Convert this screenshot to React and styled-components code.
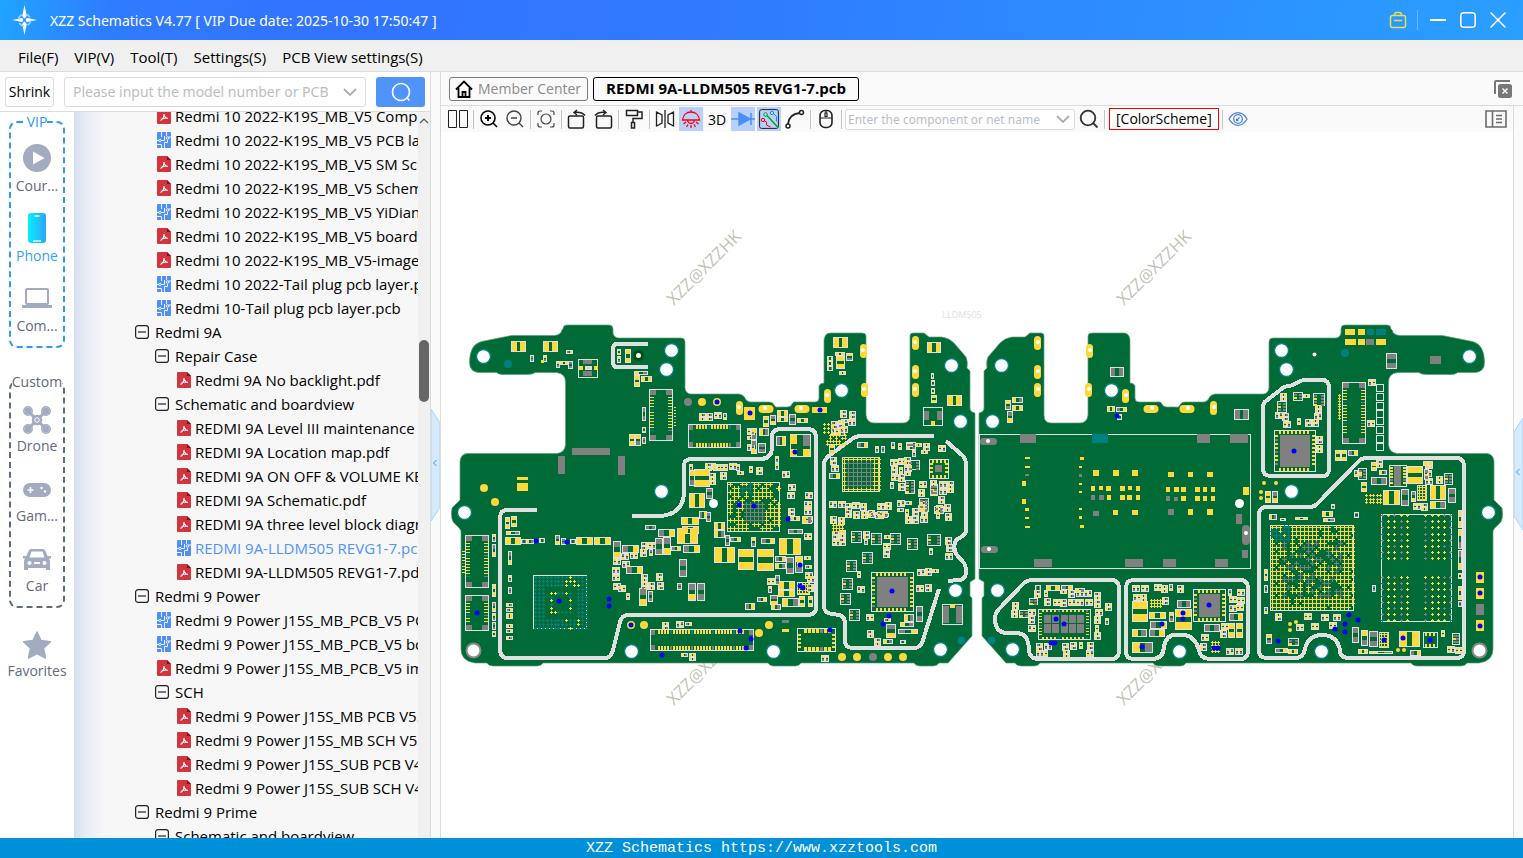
import React from 'react';
import styled, { createGlobalStyle, css } from 'styled-components';

const GlobalStyle = createGlobalStyle`
  * { box-sizing: border-box; }
  html, body, #root { height: 100%; margin: 0; }
  body {
    overflow: hidden;
    font-family: "Open Sans", "Noto Sans", sans-serif;
    font-size: 14px;
    color: #000;
  }
  button, input { font: inherit; color: inherit; }
`;

const Window = styled.div`
  display: flex;
  flex-direction: column;
  height: 100vh;
  background: #fff;
`;

/* ---------- title bar ---------- */

const TitleBar = styled.header`
  display: flex;
  align-items: center;
  height: 40px;
  flex: none;
  padding: 0 10px 0 12px;
  color: #fff;
  background: linear-gradient(100deg, #20a5ff 0, #2f7cff 110px, #3273ff 300px, #3079ff 45%, #2a9fff 100%);
`;

const Title = styled.h1`
  flex: 1;
  margin: 0 0 0 13px;
  font-family: "Noto Sans", sans-serif;
  font-size: 14px;
  font-weight: 400;
`;

const WindowButton = styled.button`
  display: flex;
  align-items: center;
  justify-content: center;
  width: 30px;
  height: 30px;
  padding: 0;
  border: 0;
  background: none;
`;

const TitleDivider = styled.span`
  width: 1px;
  height: 20px;
  margin: 0 5px 0 4px;
  background: #6fb7ff;
`;

const MenuBar = styled.nav`
  display: flex;
  align-items: center;
  gap: 16px;
  flex: none;
  height: 32px;
  padding: 2px 18px 0;
  background: #f0f0f0;
  border-bottom: 1px solid #dcdcdc;
  font-size: 15px;
`;

const MenuItem = styled.button`
  padding: 0;
  border: 0;
  background: none;
`;

const Body = styled.div`
  display: flex;
  flex: 1;
  min-height: 0;
`;

/* ---------- left side ---------- */

const Side = styled.aside`
  display: flex;
  flex-direction: column;
  flex: none;
  width: 431px;
  border-right: 1px solid #dcdcdc;
`;

const SearchBar = styled.form`
  display: flex;
  align-items: center;
  gap: 10px;
  height: 40px;
  flex: none;
  padding: 0 5px;
  border-bottom: 1px solid #dcdcdc;
`;

const ShrinkButton = styled.button`
  width: 49px;
  height: 30px;
  padding: 0;
  border: 1px solid #dcdcdc;
  border-radius: 3px;
  background: #fff;
`;

const Combo = styled.div`
  display: flex;
  align-items: center;
  width: ${p => (p.$small ? '230px' : '302px')};
  height: ${p => (p.$small ? '21px' : '30px')};
  padding: ${p => (p.$small ? '0 4px 0 2px' : '0 8px')};
  border: 1px solid #dcdcdc;
  border-radius: 3px;
  background: #fff;
  font-family: "Noto Sans", sans-serif;
  font-size: ${p => (p.$small ? '12px' : '14px')};
`;

const ComboInput = styled.input`
  flex: 1;
  min-width: 0;
  padding: 0;
  border: 0;
  outline: 0;
  background: none;
  &::placeholder { color: #b9bec6; opacity: 1; }
`;

const ComboArrow = styled.button`
  display: flex;
  padding: 0;
  border: 0;
  background: none;
`;

const SearchButton = styled.button`
  display: flex;
  align-items: center;
  justify-content: center;
  width: 49px;
  height: 30px;
  padding: 0;
  border: 0;
  border-radius: 3px;
  background: #5094fb;
`;

const SideBody = styled.div`
  display: flex;
  flex: 1;
  min-height: 0;
`;

const Rail = styled.nav`
  width: 74px;
  flex: none;
  padding: 0 9px;
`;

const RailGroup = styled.fieldset`
  display: flex;
  flex-direction: column;
  min-width: 0;
  margin: 0 0 ${p => p.$gap}px;
  padding: 0 0 10px;
  border: 2px dashed ${p => p.$color};
  border-radius: 8px;
  color: ${p => p.$color};
`;

const RailLegend = styled.legend`
  height: 20px;
  margin: 0 auto;
  padding: 0;
  line-height: 20px;
`;

const RailButton = styled.button`
  display: flex;
  flex-direction: column;
  align-items: center;
  justify-content: flex-end;
  width: 100%;
  height: ${p => (p.$first ? '64px' : '70px')};
  padding: 0;
  border: 0;
  background: none;
  color: ${p => (p.$active ? '#3aa0f5' : '#5f6b80')};
  line-height: 20px;
  white-space: nowrap;
`;

const RailIcon = styled.span`
  display: flex;
  align-items: center;
  justify-content: center;
  height: ${p => (p.$tight ? '33px' : '36px')};
`;

const TreePane = styled.div`
  display: flex;
  flex: 1;
  min-width: 0;
  background: linear-gradient(90deg, #d7e0f1 0, #e8ecf4 12px, #f7f7f7 32px);
`;

const TreeClip = styled.div`
  display: flex;
  flex: 1;
  min-width: 0;
  overflow: hidden;
`;

const Tree = styled.ul`
  flex: 1;
  min-width: 0;
  margin: -8px 0 0;
  padding: 0;
  list-style: none;
  overflow: hidden;
  font-size: 15px;
`;

const TreeRow = styled.li`
  display: flex;
  align-items: center;
  gap: ${p => (p.$folder ? '6px' : '4px')};
  height: 24px;
  padding-left: ${p => p.$indent}px;
  white-space: nowrap;
  color: ${p => (p.$active ? '#5094fb' : '#000')};
`;

const RowIcon = styled.span`
  display: flex;
  flex: none;
`;

const ScrollTrack = styled.div`
  display: flex;
  flex-direction: column;
  align-items: center;
  width: 12px;
  flex: none;
  padding-top: 6px;
  background: #f0f0f0;
`;

const ScrollThumb = styled.div`
  width: 10px;
  height: 62px;
  margin-top: 216px;
  border-radius: 5px;
  background: #666;
`;

const Splitter = styled.div`
  display: flex;
  align-items: center;
  flex: none;
  width: 10px;
  padding-top: ${p => (p.$right ? '4px' : '20px')};
  background: ${p => (p.$right ? '#fafafa' : '#f8fbf7')};
  border-${p => (p.$right ? 'left' : 'right')}: 1px solid #dcdcdc;
`;

const SplitterButton = styled.button`
  display: flex;
  padding: 0;
  border: 0;
  background: none;
`;

/* ---------- document area ---------- */

const Main = styled.main`
  display: flex;
  flex-direction: column;
  flex: 1;
  min-width: 0;
`;

const TabBar = styled.div`
  display: flex;
  align-items: center;
  gap: 5px;
  height: 34px;
  flex: none;
  padding: 0 8px;
  background: #fafafa;
  border-bottom: 1px solid #dcdcdc;
`;

const Tab = styled.button`
  display: flex;
  align-items: center;
  gap: 5px;
  height: 24px;
  padding: 0 6px 0 5px;
  border: 1px solid #7b7b7b;
  border-radius: 3px;
  background: #fafafa;
  color: #8a8a8a;
  white-space: nowrap;
  ${p => p.$active && css`
    padding: 0 12px 1px;
    border-color: #000;
    color: #000;
    font-size: 15px;
    font-weight: 700;
  `}
`;

const Spacer = styled.span`
  flex: 1;
`;

const IconButton = styled.button`
  display: flex;
  align-items: center;
  justify-content: center;
  flex: none;
  width: 24px;
  height: 24px;
  padding: 0;
  border: 0;
  background: ${p => (p.$on ? '#b8d0fb' : 'none')};
`;

const Workspace = styled.div`
  display: flex;
  flex: 1;
  min-height: 0;
`;

const Viewer = styled.div`
  display: flex;
  flex-direction: column;
  flex: 1;
  min-width: 0;
`;

const Toolbar = styled.div`
  display: flex;
  align-items: center;
  gap: 2px;
  height: 26px;
  flex: none;
  padding: 0 5px;
  background: #fafafa;
`;

const Sep = styled.span`
  width: 1px;
  height: 19px;
  margin: 0 1px;
  background: #c4c4c4;
`;

const SchemeButton = styled.button`
  height: 22px;
  margin: 0 0 0 1px;
  padding: 0 6px;
  border: 1px solid #f00;
  background: #fff;
  line-height: 20px;
`;

const Canvas = styled.div`
  display: flex;
  flex: 1;
  min-height: 0;
  background: #fff;
  svg { width: 100%; height: 100%; }
`;

const Footer = styled.footer`
  flex: none;
  height: 20px;
  background: #0090d9;
  color: #fff;
  font: 15px/22px "Liberation Mono", monospace;
  text-align: center;
`;

/* ---------- icons ---------- */

const Icon = ({ w = 20, h = w, box = `0 0 ${w} ${h}`, stroke = '#222', sw = 1.5, children }) =>
  <svg width={w} height={h} viewBox={box} fill="none" stroke={stroke} strokeWidth={sw} aria-hidden="true">
    {children}
  </svg>
;

const Logo = () =>
  <Icon w={25} h={30} stroke="none">
    <path d="M12.500 0l2.300 11-2.300 3-2.300-3zM12.500 30l2.300-11-2.300-3-2.300 3zM0 15l10-2 2.500 2-2.500 2zM25 15l-10-2-2.500 2 2.500 2z" fill="#fff" />
    <circle cx="12.500" cy="15" r="6" stroke="#9fd6ff" strokeDasharray="6 3.400" />
    <circle cx="12.500" cy="15" r="1.500" fill="#2e8fff" />
  </Icon>
;

const Chevron = ({ size = 14 }) =>
  <Icon w={size} h={8} box="0 0 14 8" stroke="#a9aeb6" sw={1.8}><path d="M1 1l6 6 6-6" /></Icon>
;

const PdfIcon = () =>
  <Icon w={14} h={16} stroke="none">
    <path d="M1 0h9l4 4v11a1 1 0 01-1 1H1a1 1 0 01-1-1V1a1 1 0 011-1z" fill="#d2353d" />
    <path d="M10 0l4 4h-4z" fill="#8c0d16" />
    <path d="M3.500 12.500c2-1 3.500-3.500 3.500-6.500M7 6c0 2.500 1.500 4 4 4.500M4 11.500c2-1.500 4-1.700 7-1.300" stroke="#fff" strokeWidth="1.100" />
  </Icon>
;

const PcbIcon = () =>
  <Icon w={14} h={16} stroke="none">
    <rect width="14" height="16" rx="1" fill="#4e90f8" />
    <path d="M4.500 0v5M0 8.500h2M4 8.500h3.500V4M9.500 0v4M11.500 5H14M4.500 16v-3.500H0M7.500 16v-5.500h3V8" stroke="#fff" strokeWidth=".9" />
    <circle cx="3" cy="8.500" r="1.200" stroke="#fff" strokeWidth=".9" />
    <circle cx="10.500" cy="6" r="1.300" stroke="#fff" strokeWidth=".9" />
  </Icon>
;

const FolderIcon = () =>
  <Icon w={14} stroke="#222" sw={1.2}>
    <rect x=".6" y=".6" width="12.800" height="12.800" rx="2.500" />
    <path d="M3 7h8" />
  </Icon>
;

const grey = '#a2abc0';

const railIcons = {
  play: <Icon w={28} stroke="none"><circle cx="14" cy="14" r="14" fill={grey} /><path d="M10 7.500v13l11.500-6.500z" fill="#fff" /></Icon>,
  phone:
    <Icon w={18} h={30} stroke="none">
      <defs>
        <linearGradient id="phone"><stop stopColor="#08eefe" /><stop offset="1" stopColor="#2fa4fb" /></linearGradient>
      </defs>
      <rect width="18" height="30" rx="3" fill="url(#phone)" />
      <path d="M6.500 3h5M5 28h8" stroke="#cfffff" />
    </Icon>,
  laptop:
    <Icon w={30} h={20} stroke={grey} sw={2}>
      <rect x="4" y="1" width="22" height="15" rx="1" />
      <path d="M0 18.500h30" strokeWidth="3" />
    </Icon>,
  drone:
    <Icon w={28} stroke={grey} sw={1.5}>
      {[[5, 5], [23, 5], [5, 23], [23, 23]].map(([x, y]) =>
        <g key={`${x}${y}`}><circle cx={x} cy={y} r="4.200" /><circle cx={x} cy={y} r="2.700" fill={grey} /></g>
      )}
      <path d="M5 5l9 9 9-9M5 23l9-9 9 9" strokeWidth="3" />
      <circle cx="14" cy="14" r="4.500" fill={grey} />
      <circle cx="14" cy="14" r="2.200" stroke="#fff" strokeWidth="1" />
    </Icon>,
  game:
    <Icon w={28} h={14} stroke="none">
      <rect width="28" height="14" rx="7" fill={grey} />
      <path d="M4.500 7h6M7.500 4v6" stroke="#fff" strokeWidth="1.600" />
      <circle cx="18.500" cy="5" r="1.200" fill="#fff" /><circle cx="22" cy="8.500" r="1.200" fill="#fff" />
    </Icon>,
  car:
    <Icon w={28} h={24} stroke="none">
      <path d="M8 1h12q2 0 3 3l1.500 4H28v2.500h-2l1 2.500v9h-4v-2H5v2H1v-9l1-2.500H0V8h3.500L5 4q1-3 3-3zM8.500 3.500L6.500 9.500h15l-2-6z" fill={grey} fillRule="evenodd" />
      <circle cx="6.500" cy="15" r="2" fill="#fff" /><circle cx="21.500" cy="15" r="2" fill="#fff" />
      <path d="M11 15h6" stroke="#fff" strokeWidth="2" />
    </Icon>,
  star:
    <Icon w={28} stroke="none">
      <path d="M14 1l4 8.500 9.500 1.200-7 6.500 2 9.800L14 22.500 5.500 27l2-9.800-7-6.500L10 9.500z" fill={grey} stroke={grey} strokeLinejoin="round" />
    </Icon>
};

const toolIcons = {
  panes: <Icon><path d="M.5 1.500h8v17h-8zM11.500 1.500h8v17h-8z" strokeWidth="1" /></Icon>,
  zoomIn: <Icon stroke="#000" sw={1.6}><circle cx="9" cy="9" r="7" /><path d="M6 9h6M9 6v6" strokeWidth="2" /><path d="M14 14l4 4" /></Icon>,
  zoomOut: <Icon stroke="#444" sw={1.4}><circle cx="9" cy="9" r="7" /><path d="M6 9h6M14 14l4 4" /></Icon>,
  fit: <Icon stroke="#444" sw={1.2}><circle cx="10" cy="10" r="5" /><path d="M2 6V4q0-2 2-2h2M14 2h2q2 0 2 2v2M18 14v2q0 2-2 2h-2M6 18H4q-2 0-2-2v-2" /></Icon>,
  rotL: <Icon><rect x="1.500" y="7" width="15" height="12" rx="1.500" /><path d="M10 1L7 3.500 10 6M7.500 3.500q7-1 10.500 3" /></Icon>,
  rotR: <Icon><rect x="3.500" y="7" width="15" height="12" rx="1.500" /><path d="M10 1l3 2.500L10 6M12.500 3.500q-7-1-10.500 3" /></Icon>,
  paint: <Icon><path d="M2.500 1.500h11v5h-11zM13.500 3H18v6.500H9v4M7.500 13.500h3V19h-3z" /></Icon>,
  flip: <Icon sw={1.3}><path d="M1.500 3v14l5.500-3V6zM18.500 3v14L13 14V6zM10 1v18" /></Icon>,
  lamp: <Icon stroke="#f00" sw={1.3}><path d="M1.500 11C2 6 5.500 3 10 3s8 3 8.500 8zM10 1v2M6.500 11q.5 3.500 3.500 3.500t3.500-3.500M5 13l-2.500 2M15 13l2.500 2M7 15.500L5.500 18M13 15.500l1.500 2.500M10 16v3" /></Icon>,
  diode: <Icon w={24} h={20} stroke="#4a8ff5"><path d="M0 10h24M20 4v12" /><path d="M8 4l11 6-11 6z" fill="#4a8ff5" /></Icon>,
  traces:
    <Icon sw={1}>
      <rect x=".6" y=".6" width="18.800" height="18.800" rx="2" />
      <path d="M8 6.500l11 12" stroke="#0a2" strokeWidth="1.500" /><circle cx="6.500" cy="5.500" r="1.800" stroke="#0a2" />
      <path d="M5.500 12l2 1v3l4 2" stroke="#f00" /><circle cx="4" cy="11" r="1.700" stroke="#f00" />
      <path d="M14.500 4.500l3 3v5" stroke="#28f" /><circle cx="13" cy="4" r="1.700" stroke="#28f" />
    </Icon>,
  arc: <Icon><circle cx="3" cy="17" r="2" /><circle cx="16.500" cy="3.500" r="2" /><path d="M3 15Q4 5 14.500 4" strokeWidth="1.800" /></Icon>,
  mouse: <Icon sw={1.6}><rect x="4" y="1.500" width="12" height="17" rx="5" /><path d="M4 9h12M10 2v2M9 4h2v3.500H9z" strokeWidth="1.200" /></Icon>,
  search: <Icon stroke="#333" sw={1.8}><circle cx="9" cy="9" r="7.300" /><path d="M14 14l4.500 4.500" /></Icon>,
  eye: <Icon stroke="#4b86dc" sw={1.3}><path d="M1 10c5-8.500 13-8.500 18 0-5 8.500-13 8.500-18 0z" /><circle cx="10" cy="10" r="4.300" /><path d="M8.500 11.500l3-3M8.500 9.500v2.200h2" /></Icon>,
  props: <Icon w={22} h={18} stroke="#6c6c6c" sw={1.6}><path d="M1 1h20v16H1zM7.500 1v16M11 5.500h6M11 9h6M11 12.500h6" /></Icon>
};

/* ---------- board drawing ---------- */

const colors = { silk: '#e0e0e0', gold: '#ffd83c', grey: '#808080', teal: '#008080', pcb: '#006b36', blue: '#0000ff' };

const outline = `M563 329q0-4 4-4h42q4 0 4 4v4q1 5 6 5h62q4 0 4 4v46q1 6 6 6h48q5 1 6 4t5 4h19q4 0 5 3t5 2h8q4 0 5-3t5-2
  h18q4 0 4-4v-12q1-3 5-3v-43q1-7 6-7h32q4 0 4 3v79q1 8 8 8h29q7 0 7-8v-79q0-3 3-3h11l5 4h13q7 1 12 6l12 14q2 4 1 11l3 3v37
  q0 4 5 5v166l-5 3v14l2 2v38l-24 27h-9q-2 3-6 3h-13q-4 0-6-3H801q-2 3-5 3h-23q-3 0-5-3H543q-2 3-6 3h-44q-4 0-6-3h-12
  q-14-2-14-14V531q-1-3-6-7t-3-16l8-8v-39q1-7 7-7.500h90q8-1 8.500-9v-62q0-9-9-10h-21q-3 2-8 2h-24q-5 0-7-2h-18q-9-1-9-10
  q0-18 12-21l30-6h43q7-1 7-5z`;

const shields = `M648 344H617q-4 0-4 5v13q0 5 4 5h31
  M537 510H508q-8 0-8 8V649q0 9 8 9h97q6 0 8-8l7-28q2-7 8-7H807q9 0 9-8V438q0-9-9-9H781q-9 0-9 8v10q0 12-12 12H691q-7 0-7 7v25q0 25-27 25H632
  M934 436H862q-6 0-10 3l-22 16q-6 4-6 10V606q0 7 8 8l8 1q5 2 5 9v16q0 8 8 8h61q7 0 9-8l16-51
  M946 441l17 15q3 3 3 9v64q0 6-5 8-10 4-5 17l8 9q2 3 2 9 0 8-8 8l-10 1
  M1033 580h78q8 0 8 8v63q0 8-8 8h-72q-9 0-10-8 0-18-13-18h-10q-11-1-11-14 0-6 4-10l24-25q3-4 10-4z
  M1134 580h106q8 0 8 8v63q0 8-8 8h-31q-9-1-10-9-4-14-15-15h-9q-9 0-11 12-1 12-12 12h-18q-8 0-8-8v-63q0-8 8-8z
  M1303 380h19q7 0 7 7v82q0 7-7 7h-51q-8 0-8-8v-61q0-4 3-6l18-14 9-2z
  M1367 458h89q8 0 8 8v185q0 7-8 7H1349q-9 0-9-8-3-15-18-15-14 0-17 14-2 9-9 9h-29q-8 0-8-8V515q0-8 8-8h43q4 0 7-3l41-42q3-4 9-4z`;

const ink = { silk: '', gold: '', grey: '', teal: '' };
const put = (c, x, y, w, h) => { ink[c] += `M${Math.round(x)} ${Math.round(y)}h${Math.round(w)}v${Math.round(h)}h-${Math.round(w)}z`; };
const code = { y: 'gold', g: 'grey', t: 'teal' };

const frame = (x, y, w, h) => {
  put('silk', x, y, w, 1);
  put('silk', x, y + h - 1, w, 1);
  put('silk', x, y, 1, h);
  put('silk', x + w - 1, y, 1, h);
};

// two-pad part, pads on its short sides
const chip = (x, y, w, h, pads = 'yy') => {
  frame(x, y, w, h);
  const long = Math.max(w, h) - 2;
  const pad = Math.max(1, Math.round(long * 0.36));
  if (w >= h) {
    put(code[pads[0]], x + 1, y + 1, pad, h - 2);
    put(code[pads[1]], x + w - 1 - pad, y + 1, pad, h - 2);
  } else {
    put(code[pads[0]], x + 1, y + 1, w - 2, pad);
    put(code[pads[1]], x + 1, y + h - 1 - pad, w - 2, pad);
  }
};

const random = seed => () => {
  seed = (seed * 16807) % 2147483647;
  return seed / 2147483647;
};

// dense area of small passives
const field = (x, y, w, h, fill = 0.85) => {
  const next = random(x * 31 + y * 17 + w);
  const kinds = ['yy', 'yg', 'gy', 'yg', 'yy'];
  const kind = () => kinds[Math.floor(next() * kinds.length)];
  for (let j = 0; j + 6 <= h; j += 8) {
    for (let i = 0; i + 6 <= w; i += 8) {
      if (next() > fill) continue;
      const px = x + i + Math.floor(next() * 2);
      const py = y + j + Math.floor(next() * 2);
      const r = next();
      if (r < 0.4) {
        chip(px, py, 7, 4, kind());
        chip(px, py + 4, 7, 4, kind());
      } else if (r < 0.8) {
        chip(px, py, 4, 7, kind());
        chip(px + 4, py, 4, 7, kind());
      } else if (r < 0.9) {
        chip(px, py, 4, 7, kind());
      } else {
        chip(px, py, 7, 4, kind());
      }
    }
  }
};

// small square ic with pads on two sides
const ic = (x, y, w = 11, h = 12) => {
  frame(x, y, w, h);
  for (let i = 1; i + 2 < h; i += 3) {
    put(i % 2 ? 'grey' : 'gold', x + 1, y + i + 1, 3, 2);
    put('grey', x + w - 4, y + i + 1, 3, 2);
  }
};

const pins = (x, y, n, step, w, h, vertical, alt = 'grey') => {
  for (let i = 0; i < n; i += 1) {
    const c = i % 7 === 4 ? alt : 'gold';
    if (vertical) put(c, x, y + i * step, w, h);
    else put(c, x + i * step, y, w, h);
  }
};

const connector = (x, y, w, h, vertical) => {
  frame(x, y, w, h);
  const cw = vertical ? 6 : 4;
  [[x + 1, y + 1], [x + w - cw - 1, y + 1], [x + 1, y + h - 6], [x + w - cw - 1, y + h - 6]].forEach(([a, b]) => put('grey', a, b, cw, 5));
  if (vertical) {
    pins(x + 1, y + 8, Math.floor((h - 15) / 3), 3, 4, 1, true, 'teal');
    pins(x + w - 5, y + 8, Math.floor((h - 15) / 3), 3, 4, 1, true);
  } else {
    pins(x + 8, y + 1, Math.floor((w - 15) / 3), 3, 2, 4, false, 'teal');
    pins(x + 8, y + h - 5, Math.floor((w - 15) / 3), 3, 2, 4, false);
  }
};

// ball grid, colour of each ball is chosen by pick(column, row)
const balls = (x, y, cols, rows, step, pick, arm = 1) => {
  for (let j = 0; j < rows; j += 1) {
    for (let i = 0; i < cols; i += 1) {
      const c = pick(i, j);
      if (c) {
        const px = Math.round(x + i * step);
        const py = Math.round(y + j * step);
        put(c, px - arm, py, arm * 2 + 1, 1);
        put(c, px, py - arm, 1, arm * 2 + 1);
      }
    }
  }
};

const qfn = (x, y, w, h) => {
  frame(x, y, w, h);
  for (let i = 5; i < w - 6; i += 4) {
    put('gold', x + i, y + 1, 2, 3);
    put('gold', x + i, y + h - 4, 2, 3);
  }
  for (let i = 5; i < h - 6; i += 4) {
    put(i % 3 ? 'gold' : 'grey', x + 1, y + i, 3, 2);
    put('gold', x + w - 4, y + i, 3, 2);
  }
  put('grey', x + 6, y + 5, w - 12, h - 10);
};

const chips = `
511 341 15 11 yy;543 341 15 11 yy;530 355 4 7 gg;543 355 4 7 yg;566 350 7 4 gy;556 361 4 7 yg;560 361 8 4 yy;568 361 5 8 gg;
617 349 4 6 yy;617 356 4 7 yg;625 349 6 14 yy;634 371 14 4 yg;634 375 6 12 yy;641 376 11 6 yy;642 407 4 14 gg;642 427 4 6 gy;
629 434 6 12 yy;635 434 6 12 yg;642 437 4 7 gg;505 517 5 12 yy;511 516 6 11 yy;506 531 14 4 yg;505 537 16 8 yy;521 539 6 5 gg;
526 539 8 5 yg;539 538 6 5 yg;555 535 5 10 gy;561 538 5 7 gg;570 539 6 5 gg;576 537 17 8 yy;594 537 17 8 yy;
492 534 4 8 yg;492 544 4 13 gy;492 584 4 13 yy;492 602 4 10 gy;492 613 4 8 yg;492 622 4 8 gg;492 631 4 6 yy;
508 551 4 14 gy;508 575 4 7 yg;508 587 4 7 gg;506 603 7 4 yg;506 608 7 4 gy;506 613 7 6 yy;506 624 7 4 yy;506 629 7 4 gy;506 636 7 4 yg;
613 541 8 17 gy;622 545 17 8 gy;626 566 17 8 gy;645 525 11 5 gg;658 529 17 8 gy;655 538 8 17 gg;663 537 8 18 gy;671 546 10 5 gy;
682 526 17 8 yy;677 528 21 16 yy;683 545 17 8 gy;679 559 8 18 gg;639 588 8 18 gy;648 591 5 11 gg;677 583 5 7 gg;688 583 8 18 gy;697 583 8 18 gg;
833 337 15 11 yy;827 356 6 5 yy;827 361 6 5 yy;827 366 6 5 yg;835 352 10 4 yy;836 356 9 13 yy;846 353 7 8 yg;839 371 7 4 yy;
927 342 14 11 yy;931 373 3 6 yy;931 380 4 6 yg;931 388 4 6 yy;931 395 6 8 yy;947 395 15 11 yy;
777 410 11 7 yy;777 417 11 5 yy;789 414 7 11 gg;797 418 11 5 yy;751 428 6 12 yg;759 428 10 8 yg;763 416 6 11 yy;770 415 6 10 gy;
776 436 10 10 gy;751 440 6 14 gy;758 443 8 10 gg;694 469 16 18 yy;689 470 6 16 yg;706 488 7 11 gg;689 493 16 15 yy;
681 517 18 8 yy;699 511 8 8 gy;706 512 5 10 gg;714 522 11 8 yy;714 530 11 8 yg;725 535 5 11 gg;730 537 11 5 gy;751 537 5 10 yg;761 538 14 6 gy;
714 547 21 16 yy;738 549 16 21 yy;757 549 17 22 yy;779 538 22 17 yy;775 556 11 6 gy;775 563 11 6 yg;786 557 8 17 gg;795 556 8 17 yg;
778 581 17 9 yy;778 590 17 7 yy;775 575 5 10 gg;757 597 10 5 gy;770 595 8 10 gy;771 604 10 6 yg;782 598 17 9 yg;799 596 6 11 yy;808 596 5 11 yy;745 603 10 7 gy;
797 560 6 10 yy;802 516 10 8 yg;790 516 10 5 yy;788 529 15 5 gg;829 444 6 10 yy;829 473 11 6 gy;857 442 11 6 gy;875 446 4 7 yg;881 446 4 7 gg;
916 606 7 16 gg;904 614 10 8 yg;886 624 10 14 gy;900 622 14 5 yg;898 629 20 5 gy;883 639 10 5 yg;900 640 6 4 gy;
1110 367 14 10 gg;1234 409 15 11 gg;1005 400 6 10 yg;1012 397 11 6 yg;1012 405 11 6 yy;1007 411 6 12 gy;1107 406 8 6 yy;1116 407 11 5 gy;1117 414 5 6 yg;
1046 585 14 6 yy;1061 585 12 5 gy;1035 585 6 6 gg;1075 588 10 5 yg;1132 601 16 21 yy;1132 629 15 8 yg;1149 629 16 8 gy;1149 612 17 7 yy;1150 621 17 8 gy;
1169 612 5 10 yg;1175 609 17 21 yy;1177 600 14 8 gg;1132 642 21 11 yg;1229 613 14 8 gy;1228 623 7 15 yy;1236 623 7 15 yy;1204 624 16 8 gg;
1386 353 11 16 gg;1335 450 6 11 yy;1341 450 6 11 yy;1348 450 10 6 gy;1265 491 6 12 yy;1272 491 6 12 gy;1371 462 6 9 yy;1371 477 16 8 gg;1361 482 6 10 yy;
1379 470 8 5 yg;1383 490 17 15 yy;1401 489 8 17 gg;1407 466 16 18 yy;1424 469 5 11 gg;1423 461 10 5 yy;1430 485 16 15 yy;1448 488 8 15 gg;1430 501 16 8 yg;1411 491 5 11 gy;
1322 511 11 6 yy;1323 518 12 4 yg;1295 517 13 3 yy;1280 518 6 3 gy;1269 514 8 6 yg;1331 504 4 5 yg;1354 512 5 6 gg;1372 585 4 7 gg;
1264 569 4 12 yy;1264 585 4 8 gg;1264 607 4 7 gy;1266 634 6 10 yg;1275 648 13 5 gy;1288 649 10 5 yy;1352 627 7 16 gg;1361 630 7 16 yg;1369 631 9 16 gg;1399 631 21 16 yy;
1410 650 11 6 gy;1358 649 10 5 yy;1369 651 24 3 yg;1458 510 4 18 yy;1458 529 4 20 yg;1458 550 4 20 gy;1458 573 4 6 yy;1458 586 4 14 yy;1458 601 4 6 gg;
`;

chips.split(';').forEach(line => {
  const [x, y, w, h, pads] = line.trim().split(' ');
  if (pads) chip(+x, +y, +w, +h, pads);
});

const fields = [
  [612, 558, 12, 30], [621, 552, 20, 14, 0.7], [640, 541, 16, 18], [618, 585, 16, 14, 0.5], [640, 573, 28, 16], [698, 412, 34, 8], [688, 463, 30, 8],
  [712, 463, 36, 16], [708, 472, 10, 16], [748, 466, 18, 8], [774, 455, 16, 24, 0.7], [747, 428, 8, 26], [767, 578, 10, 20], [804, 492, 9, 88, 0.8],
  [787, 484, 9, 30, 0.7], [806, 576, 8, 20], [830, 420, 16, 16], [840, 410, 18, 24, 0.8], [830, 456, 10, 18], [890, 442, 38, 8, 0.9], [890, 458, 14, 32, 1],
  [904, 456, 12, 24, 0.8], [912, 450, 18, 8, 0.8], [918, 480, 8, 32, 0.9], [896, 500, 30, 24, 0.8], [930, 480, 26, 24, 0.8], [936, 504, 20, 20, 0.9], [829, 500, 14, 24, 0.8], [844, 502, 50, 16, 0.9], [866, 512, 26, 8, 0.9], [831, 530, 14, 16],
  [857, 570, 10, 28, 0.8], [866, 614, 16, 32, 0.6], [884, 618, 12, 8], [916, 568, 26, 8, 0.7], [916, 584, 16, 8, 0.7], [937, 445, 8, 12], [863, 530, 8, 18],
  [883, 534, 8, 24, 0.6], [928, 548, 10, 10, 0.7], [945, 536, 8, 24], [662, 621, 8, 7], [676, 621, 16, 7], [680, 653, 20, 7], [820, 654, 14, 6, 0.5],
  [1011, 602, 8, 16], [1033, 590, 10, 16, 0.8], [1044, 590, 52, 16, 0.9], [1028, 608, 8, 24], [1094, 592, 12, 50, 0.9], [1104, 602, 8, 24], [1036, 642, 16, 14], [1062, 642, 32, 14, 0.8],
  [1132, 585, 16, 14, 0.7], [1153, 584, 32, 7, 1], [1162, 597, 8, 12, 0.7], [1193, 584, 34, 5], [1228, 588, 16, 24, 0.8], [1220, 622, 8, 16, 0.6], [1200, 634, 8, 16], [1226, 647, 16, 8],
  [1280, 392, 8, 8], [1303, 394, 8, 10], [1274, 412, 20, 16, 0.8], [1314, 404, 10, 24, 0.9], [1296, 418, 26, 12], [1270, 440, 4, 32], [1316, 436, 8, 16, 0.6],
  [1368, 378, 6, 24, 0.6], [1367, 420, 8, 20], [1376, 460, 12, 8], [1354, 470, 8, 8], [1424, 462, 8, 22, 0.8], [1436, 476, 10, 8], [1413, 502, 14, 7],
  [1275, 613, 10, 7], [1304, 613, 10, 7], [1332, 613, 12, 8], [1296, 624, 10, 8], [1310, 622, 22, 8], [1320, 614, 16, 16, 0.8], [1440, 630, 10, 8], [1446, 646, 14, 10]
];
fields.forEach(f => field(...f));

[[851, 531], [871, 533], [890, 533], [907, 538], [862, 552], [846, 560], [842, 578], [840, 593], [849, 609], [927, 534, 14, 12], [905, 480, 10, 14], [919, 498, 10, 14],
  [906, 442, 10, 8], [908, 460, 12, 10], [930, 484, 8, 12], [934, 506, 10, 8], [1029, 598, 9, 7], [1019, 610, 10, 8], [1293, 392, 10, 9], [1313, 393, 12, 13], [1277, 401, 10, 12],
  [1358, 468, 9, 12], [1444, 473, 9, 12], [1288, 638, 11, 8], [1452, 633, 8, 12]].forEach(a => ic(...a));

connector(649, 389, 24, 52, true);
connector(465, 535, 24, 53, true);
connector(465, 595, 24, 36, true);
connector(688, 424, 53, 24);
connector(650, 629, 104, 22);
connector(1342, 382, 24, 62, true);
frame(1389, 465, 18, 22);
pins(1390, 467, 6, 3, 3, 2, true);
pins(1403, 467, 6, 3, 3, 2, true);
put('grey', 1394, 466, 7, 20);
pins(462, 551, 8, 3, 3, 1, true);
pins(674, 407, 7, 3, 2, 1, true);

frame(797, 628, 39, 24);
pins(804, 629, 7, 4, 3, 4);
pins(804, 647, 7, 4, 3, 4);
pins(798, 634, 4, 4, 3, 2, true);
pins(832, 634, 4, 4, 3, 2, true);

frame(578, 359, 20, 19);
frame(790, 434, 21, 23);
frame(923, 407, 20, 19);
frame(942, 604, 21, 21);
[['grey', 583, 360, 9, 4], ['grey', 583, 371, 9, 5], ['gold', 579, 366, 4, 4], ['gold', 594, 366, 4, 4], ['silk', 585, 366, 7, 4], ['gold', 587, 367, 2, 2],
  ['grey', 572, 448, 38, 7], ['grey', 558, 456, 7, 18], ['grey', 618, 456, 7, 19], ['gold', 517, 477, 11, 3], ['gold', 517, 483, 11, 8],
  ['gold', 744, 407, 11, 13], ['gold', 812, 407, 15, 6], ['grey', 782, 620, 7, 3], ['gold', 782, 629, 7, 3], ['gold', 541, 360, 3, 3],
  ['gold', 790, 435, 7, 9], ['grey', 803, 435, 7, 11], ['gold', 790, 449, 7, 7], ['gold', 803, 449, 7, 7],
  ['grey', 924, 411, 5, 9], ['grey', 937, 411, 5, 9], ['gold', 931, 421, 4, 4],
  ['grey', 943, 606, 6, 17], ['grey', 956, 606, 6, 17], ['gold', 950, 605, 5, 3]].forEach(a => put(...a));

// ball grids
const mix = random(977);
frame(533, 575, 54, 54);
balls(535, 577, 14, 14, 3.9, (i, j) => {
  const ring = i > 2 && i < 11 && j > 2 && j < 11;
  if (ring) {
    const edge = i === 4 || i === 9 || j === 4 || j === 9;
    if (!edge || i < 4 || j < 4 || i > 9 || j > 9) return null;
    return mix() > 0.7 ? 'gold' : 'teal';
  }
  return i > 7 && i < 12 && (j < 3 || j > 10) && mix() > 0.4 ? 'gold' : 'teal';
});
frame(727, 482, 53, 50);
balls(730, 484, 13, 12, 4, (i, j) => {
  if (i > 3 && i < 9 && j > 4 && j < 10) return 'grey';
  if (i > 2 && i < 6 && j < 3 && mix() > 0.4) return 'teal';
  return mix() > 0.3 ? 'gold' : null;
}, 2);
frame(842, 457, 38, 35);
balls(844, 459, 9, 8, 4.300, (i, j) => (i > 0 && i < 7 && j > 0 && j < 7 ? 'grey' : 'gold'), 2);
balls(824, 424, 3, 3, 4, () => 'gold');
balls(827, 435, 7, 4, 3, () => (mix() > 0.3 ? 'gold' : null));
balls(833, 525, 4, 3, 3, () => 'gold');
frame(797, 582, 13, 13);
balls(799, 584, 4, 4, 3, () => 'gold');
frame(1270, 525, 84, 86);
balls(1272, 527, 21, 21, 4, (i, j) => {
  if (i < 5 && j < 4 && mix() > 0.5) return 'teal';
  if (i > 2 && i < 18 && j > 3 && j < 18) {
    const r = mix();
    return r > 0.6 ? 'gold' : r > 0.35 ? 'grey' : null;
  }
  return mix() > 0.16 ? 'gold' : null;
}, 2);
frame(1381, 514, 71, 108);
balls(1382, 515, 12, 18, 6.200, (i, j) => {
  if (i === 5 || i === 6 || (j > 7 && j < 10)) return null;
  if (i === 0 || i === 11) return j % 2 ? 'teal' : 'grey';
  return (i + (j % 5 ? 0 : 1)) % 4 === 3 ? 'grey' : 'gold';
});
balls(1366, 495, 5, 3, 3.500, () => 'gold');
frame(1417, 485, 10, 16);
balls(1419, 487, 3, 5, 3, () => 'gold');
frame(1379, 632, 10, 16);
balls(1381, 634, 3, 5, 3, () => 'gold');
balls(1151, 600, 4, 3, 3, () => 'gold');
balls(1212, 642, 3, 4, 3, () => 'gold');
balls(1339, 395, 1, 4, 3, () => 'gold');
balls(1339, 406, 1, 5, 3, () => 'gold');

qfn(871, 572, 43, 40);
qfn(1193, 589, 33, 33);
qfn(1274, 430, 42, 42);
frame(929, 459, 20, 20);
pins(932, 460, 4, 4, 2, 3);
pins(932, 475, 4, 4, 2, 3);
pins(930, 463, 3, 4, 3, 2, true);
pins(945, 463, 3, 4, 3, 2, true);
put('grey', 935, 465, 7, 7);
frame(1423, 632, 15, 16);
pins(1425, 633, 3, 4, 2, 3);
pins(1425, 644, 3, 4, 2, 3);

// power amplifier with a split ground pad
frame(1038, 609, 53, 31);
pins(1042, 610, 12, 4, 2, 2);
pins(1042, 637, 12, 4, 2, 2, false, 'teal');
pins(1039, 613, 8, 3, 3, 1, true);
pins(1086, 613, 8, 3, 3, 1, true);
[1044, 1052, 1061, 1069, 1077].forEach(x => {
  put('grey', x, 615, 7, 8);
  put('grey', x, 624, 7, 9);
});

// card tray
frame(979, 434, 272, 135);
[[1020, 434, 16, 9], [1197, 434, 13, 9], [1230, 434, 18, 9], [1034, 559, 18, 8], [1125, 559, 18, 8], [1163, 559, 13, 8], [1215, 559, 13, 8],
  [1236, 514, 6, 10], [1242, 550, 6, 8], [1025, 474, 4, 2], [1079, 474, 3, 3], [1091, 495, 4, 5], [1099, 495, 5, 5], [1093, 511, 6, 5],
  [1166, 496, 4, 5], [1174, 497, 4, 4], [1168, 509, 6, 6], [1430, 356, 11, 8], [1366, 339, 8, 6], [1476, 604, 8, 11]].forEach(a => put('grey', ...a));
[[1092, 434, 16, 9], [1367, 329, 7, 6], [1376, 329, 10, 6]].forEach(a => put('teal', ...a));
[[1025, 457, 5, 2], [1025, 466, 5, 2], [1022, 481, 4, 5], [1022, 499, 4, 5], [1025, 508, 4, 3], [1025, 517, 4, 2], [1025, 526, 5, 2],
  [1080, 457, 4, 3], [1079, 466, 3, 2], [1079, 483, 3, 2], [1079, 491, 3, 2], [1079, 508, 3, 2], [1079, 516, 3, 3], [1080, 525, 4, 3],
  [1093, 470, 6, 6], [1113, 470, 6, 6], [1132, 470, 6, 6], [1091, 486, 4, 5], [1099, 486, 4, 4], [1106, 486, 5, 5], [1120, 486, 5, 5], [1128, 486, 4, 4], [1136, 486, 4, 5],
  [1107, 495, 4, 5], [1120, 495, 5, 5], [1127, 495, 5, 5], [1136, 495, 4, 5], [1113, 510, 5, 5], [1132, 510, 6, 5],
  [1168, 472, 6, 5], [1188, 472, 5, 5], [1207, 472, 6, 5], [1166, 487, 4, 5], [1174, 487, 5, 5], [1181, 487, 5, 5], [1195, 487, 5, 5], [1203, 487, 4, 5], [1211, 487, 4, 5],
  [1181, 496, 5, 5], [1195, 496, 5, 5], [1203, 496, 4, 5], [1211, 496, 4, 5], [1188, 509, 5, 6], [1207, 509, 6, 6], [1243, 487, 6, 8],
  [1345, 329, 10, 6], [1358, 329, 7, 6], [1345, 339, 11, 6], [1358, 339, 7, 6], [1376, 339, 10, 6], [1476, 572, 8, 11], [1476, 588, 8, 11], [1476, 620, 8, 11]].forEach(a => put('gold', ...a));
[384, 393, 402, 410, 417, 426, 435, 443].forEach(y => frame(1376, y, 8, 8));

const holes = [[483, 356], [671, 350], [666, 369], [661, 491], [464, 512], [631, 651], [841, 390], [951, 365], [960, 421], [773, 651], [940, 649], [955, 590]];
const slots = [[863, 351], [864, 390], [827, 396], [739, 408], [915, 343], [915, 372], [915, 390]];
const wideSlots = [[766, 409], [802, 409]];
const pads = [[484, 488], [495, 502], [702, 402], [717, 402], [631, 625], [644, 625], [769, 625], [759, 633], [842, 657], [857, 657], [888, 657], [903, 657], [1264, 483], [1276, 483], [1261, 492], [1261, 498], [1290, 624], [1296, 622], [1290, 630], [1398, 650], [1404, 650]];
const greyPads = [[688, 402], [873, 657]];
const probes = [[717, 402], [750, 413], [820, 410], [795, 452], [739, 505], [754, 506], [788, 519], [800, 565], [800, 586], [803, 588], [559, 601], [609, 599], [609, 606],
  [536, 541], [567, 542], [477, 613], [631, 625], [662, 655], [740, 631], [751, 639], [746, 648], [830, 630], [892, 591], [889, 616], [883, 624],
  [1117, 416], [1056, 619], [1064, 624], [1051, 643], [1055, 643], [1183, 613], [1183, 619], [1162, 624], [1142, 647], [1209, 605], [1214, 648], [1218, 648],
  [1294, 451], [1349, 615], [1358, 620], [1335, 629], [1345, 624], [1345, 632], [1278, 641], [1384, 640], [1403, 638], [1430, 640], [1480, 577], [1480, 593], [1480, 626]];

const Outline = () => <path d={outline} fill={colors.pcb} stroke="#5c9f7c" strokeWidth=".7" />;

const Drills = () =>
  <>
    {holes.map(([x, y]) => <circle key={`${x}-${y}`} cx={x + 0.5} cy={y + 0.5} r="7" fill="#fff" stroke={colors.teal} strokeWidth="1.300" />)}
    <circle cx="473.500" cy="650.500" r="7" fill="#fff" stroke="#888" strokeWidth="2" />
    <circle cx="713.500" cy="503.500" r="4.500" fill="#fff" />
    <circle cx="961.500" cy="640.500" r="4" fill={colors.teal} />
    {slots.map(([x, y]) =>
      <g key={`${x}-${y}`}>
        <rect x={x - 3} y={y - 7} width="7" height="14" rx="3.500" fill={colors.gold} />
        <circle cx={x} cy={y - 1} r="2" fill="#fff" />
      </g>
    )}
    {wideSlots.map(([x, y]) =>
      <g key={x}>
        <rect x={x - 7.5} y={y - 4} width="15" height="8" rx="4" fill={colors.gold} />
        <circle cx={x - 1} cy={y - 1} r="2" fill="#fff" />
      </g>
    )}
  </>
;

const Watermark = ({ x, y }) =>
  <text transform={`translate(${x} ${y}) rotate(-45)`} fontSize="17" fill="#b4b1a2" fillOpacity=".8">XZZ@XZZHK</text>
;

const Board = () =>
  <svg viewBox="441 132 1072 706" role="img" aria-label="Board view">
    <text x="962" y="318" textAnchor="middle" fontSize="9" fill="#dedede">LLDM505</text>
    {[306, 706].map(y => [674, 1124].map(x => <Watermark key={`${x}-${y}`} x={x} y={y} />))}
    <Outline />
    <g transform="translate(1954 0) scale(-1 1)"><Outline /></g>
    <Drills />
    <g transform="translate(1953 0) scale(-1 1)"><Drills /></g>
    <circle cx="508" cy="364" r="4" fill={colors.teal} />
    <circle cx="1345" cy="353" r="4" fill={colors.teal} />
    <circle cx="638.500" cy="355.500" r="4" fill="#fff" stroke="#044d12" strokeWidth="3" />
    <circle cx="1314.500" cy="354.500" r="2" fill="#fff" />
    <path d={shields} fill="none" stroke={colors.silk} strokeWidth="4" shapeRendering="crispEdges" />
    <g shapeRendering="crispEdges">
      {Object.keys(ink).map(c => <path key={c} d={ink[c]} fill={colors[c]} />)}
    </g>
    {[[988, 441], [989, 549]].map(([x, y]) =>
      <g key={y}><rect x={x - 8} y={y - 3} width="17" height="7" rx="3.500" fill={colors.grey} /><circle cx={x} cy={y} r="2" fill="#fff" /></g>
    )}
    <rect x="1242" y="525" width="8" height="20" rx="4" fill={colors.grey} />
    <circle cx="1246" cy="533" r="2" fill="#fff" />
    {pads.map(([x, y], i) => <circle key={i} cx={x} cy={y} r={x > 1200 ? 2 : 4} fill={colors.gold} />)}
    {greyPads.map(([x, y]) => <circle key={x} cx={x} cy={y} r="4" fill={colors.grey} />)}
    {probes.map(([x, y], i) => <circle key={i} cx={x} cy={y} r="2.500" fill={colors.blue} />)}
  </svg>
;

/* ---------- content ---------- */

const rows = [
  ['pdf', 2, 'Redmi 10 2022-K19S_MB_V5 Component'],
  ['pcb', 2, 'Redmi 10 2022-K19S_MB_V5 PCB layer.pcb'],
  ['pdf', 2, 'Redmi 10 2022-K19S_MB_V5 SM Schematic'],
  ['pdf', 2, 'Redmi 10 2022-K19S_MB_V5 Schematic'],
  ['pcb', 2, 'Redmi 10 2022-K19S_MB_V5 YiDianTong'],
  ['pdf', 2, 'Redmi 10 2022-K19S_MB_V5 boardview'],
  ['pdf', 2, 'Redmi 10 2022-K19S_MB_V5-image.pdf'],
  ['pcb', 2, 'Redmi 10 2022-Tail plug pcb layer.pcb'],
  ['pcb', 2, 'Redmi 10-Tail plug pcb layer.pcb'],
  ['dir', 1, 'Redmi 9A'],
  ['dir', 2, 'Repair Case'],
  ['pdf', 3, 'Redmi 9A No backlight.pdf'],
  ['dir', 2, 'Schematic and boardview'],
  ['pdf', 3, 'REDMI 9A Level III maintenance guide'],
  ['pdf', 3, 'REDMI 9A Location map.pdf'],
  ['pdf', 3, 'REDMI 9A ON OFF & VOLUME KEY.pdf'],
  ['pdf', 3, 'REDMI 9A Schematic.pdf'],
  ['pdf', 3, 'REDMI 9A three level block diagram'],
  ['pcb', 3, 'REDMI 9A-LLDM505 REVG1-7.pcb', true],
  ['pdf', 3, 'REDMI 9A-LLDM505 REVG1-7.pdf'],
  ['dir', 1, 'Redmi 9 Power'],
  ['pcb', 2, 'Redmi 9 Power J15S_MB_PCB_V5 PCB layer'],
  ['pcb', 2, 'Redmi 9 Power J15S_MB_PCB_V5 boardview'],
  ['pdf', 2, 'Redmi 9 Power J15S_MB_PCB_V5 image'],
  ['dir', 2, 'SCH'],
  ['pdf', 3, 'Redmi 9 Power J15S_MB PCB V5.pdf'],
  ['pdf', 3, 'Redmi 9 Power J15S_MB SCH V5.pdf'],
  ['pdf', 3, 'Redmi 9 Power J15S_SUB PCB V4.pdf'],
  ['pdf', 3, 'Redmi 9 Power J15S_SUB SCH V4.pdf'],
  ['dir', 1, 'Redmi 9 Prime'],
  ['dir', 2, 'Schematic and boardview']
];

const rowIcons = { pdf: <PdfIcon />, pcb: <PcbIcon />, dir: <FolderIcon /> };

const menus = ['File(F)', 'VIP(V)', 'Tool(T)', 'Settings(S)', 'PCB View settings(S)'];

const tools = [
  ['panes', 'Split view'], null,
  ['zoomIn', 'Zoom in'], ['zoomOut', 'Zoom out'], null,
  ['fit', 'Fit'], null,
  ['rotL', 'Rotate left'], ['rotR', 'Rotate right'], null,
  ['paint', 'Paint'], null,
  ['flip', 'Flip'], ['lamp', 'Lamp', true], ['3D', '3D view'], ['diode', 'Diode values', true], ['traces', 'Traces', true], ['arc', 'Curve'], null,
  ['mouse', 'Mouse'], null
];

const RailItem = ({ icon, label, active, first, tight }) =>
  <RailButton type="button" $active={active} $first={first}>
    <RailIcon $tight={tight}>{railIcons[icon]}</RailIcon>
    {label}
  </RailButton>
;

const Handle = ({ right }) =>
  <Splitter $right={right}>
    <SplitterButton type="button" aria-label="Toggle panel">
      <Icon w={9} h={112} stroke="#3b9be8" sw={1}>
        <path d={right ? 'M9 0L0 14v84l9 14z' : 'M0 0l9 14v84l-9 14z'} fill="#d6eafc" stroke="#a9d3f5" />
        <path d="M5.500 51l-3 3 3 3" />
      </Icon>
    </SplitterButton>
  </Splitter>
;

const App = () =>
  <Window>
    <GlobalStyle />
    <TitleBar>
      <Logo />
      <Title>XZZ Schematics V4.77 [ VIP Due date: 2025-10-30 17:50:47 ]</Title>
      <WindowButton type="button" aria-label="Toolbox">
        <Icon w={18} stroke="#e6e04a"><rect x="1.500" y="4.500" width="15" height="12" rx="2" /><path d="M5.500 4.500q0-3 2-3h3q2 0 2 3M5 9.500h8" /></Icon>
      </WindowButton>
      <TitleDivider />
      <WindowButton type="button" aria-label="Minimize"><Icon w={16} stroke="#fff" sw={2}><path d="M0 8h16" /></Icon></WindowButton>
      <WindowButton type="button" aria-label="Maximize"><Icon w={16} stroke="#fff" sw={1.5}><rect x=".8" y=".8" width="14.400" height="14.400" rx="3" /></Icon></WindowButton>
      <WindowButton type="button" aria-label="Close"><Icon w={16} stroke="#fff"><path d="M.5.5l15 15M15.500.5l-15 15" /></Icon></WindowButton>
    </TitleBar>
    <MenuBar>
      {menus.map(m => <MenuItem key={m} type="button">{m}</MenuItem>)}
    </MenuBar>
    <Body>
      <Side>
        <SearchBar>
          <ShrinkButton type="button">Shrink</ShrinkButton>
          <Combo>
            <ComboInput aria-label="Model" placeholder="Please input the model number or PCB" />
            <ComboArrow type="button" aria-label="Show models"><Chevron /></ComboArrow>
          </Combo>
          <SearchButton type="submit" aria-label="Search">
            <Icon stroke="#fff" sw={1.6}><circle cx="10" cy="10" r="8.500" /><path d="M15.500 15.500l3 3" /></Icon>
          </SearchButton>
        </SearchBar>
        <SideBody>
          <Rail>
            <RailGroup $color="#2f9bf0" $gap={24}>
              <RailLegend>VIP</RailLegend>
              <RailItem icon="play" label="Cour..." first />
              <RailItem icon="phone" label="Phone" active />
              <RailItem icon="laptop" label="Com..." />
            </RailGroup>
            <RailGroup $color="#5f6b80" $gap={9}>
              <RailLegend>Custom</RailLegend>
              <RailItem icon="drone" label="Drone" first tight />
              <RailItem icon="game" label="Gam..." tight />
              <RailItem icon="car" label="Car" tight />
            </RailGroup>
            <RailItem icon="star" label="Favorites" first tight />
          </Rail>
          <TreePane>
            <TreeClip>
              <Tree>
                {rows.map(([kind, level, label, active], i) =>
                  <TreeRow key={i} $folder={kind === 'dir'} $indent={41 + level * 20 + (kind === 'dir' ? 0 : 2)} $active={active}>
                    <RowIcon>{rowIcons[kind]}</RowIcon>
                    {label}
                  </TreeRow>
                )}
              </Tree>
            </TreeClip>
            <ScrollTrack>
              <Icon w={10} h={6} stroke="#555" sw={1.2}><path d="M1 5l4-4 4 4" /></Icon>
              <ScrollThumb />
            </ScrollTrack>
          </TreePane>
        </SideBody>
      </Side>
      <Handle />
      <Main>
        <TabBar>
          <Tab type="button">
            <Icon w={18} stroke="#000" sw={1.8}><path d="M1 9.500l8-8 8 8M3.500 8v9h11V8M7.500 17v-5h3v5" /></Icon>
            Member Center
          </Tab>
          <Tab type="button" $active>REDMI 9A-LLDM505 REVG1-7.pcb</Tab>
          <Spacer />
          <IconButton type="button" aria-label="Close all">
            <Icon w={18} stroke="#777" sw={2}>
              <path d="M1 14V2q0-1 1-1h14" />
              <rect x="5" y="5" width="12" height="12" rx="1.500" fill="#777" />
              <path d="M8.500 8.500l5 5M13.500 8.500l-5 5" stroke="#fff" strokeWidth="1.400" />
            </Icon>
          </IconButton>
        </TabBar>
        <Workspace>
          <Viewer>
            <Toolbar>
              {tools.map((t, i) => t
                ? <IconButton key={i} type="button" aria-label={t[1]} $on={t[2]}>{toolIcons[t[0]] || t[0]}</IconButton>
                : <Sep key={i} />
              )}
              <Combo $small>
                <ComboInput aria-label="Component or net" placeholder="Enter the component or net name" />
                <ComboArrow type="button" aria-label="Show components"><Chevron /></ComboArrow>
              </Combo>
              <IconButton type="button" aria-label="Find">{toolIcons.search}</IconButton>
              <Sep />
              <SchemeButton type="button">[ColorScheme]</SchemeButton>
              <Sep />
              <IconButton type="button" aria-label="Visibility">{toolIcons.eye}</IconButton>
              <Spacer />
              <IconButton type="button" aria-label="Properties">{toolIcons.props}</IconButton>
            </Toolbar>
            <Canvas><Board /></Canvas>
          </Viewer>
          <Handle right />
        </Workspace>
      </Main>
    </Body>
    <Footer>XZZ Schematics https://www.xzztools.com</Footer>
  </Window>
;

export default App;
